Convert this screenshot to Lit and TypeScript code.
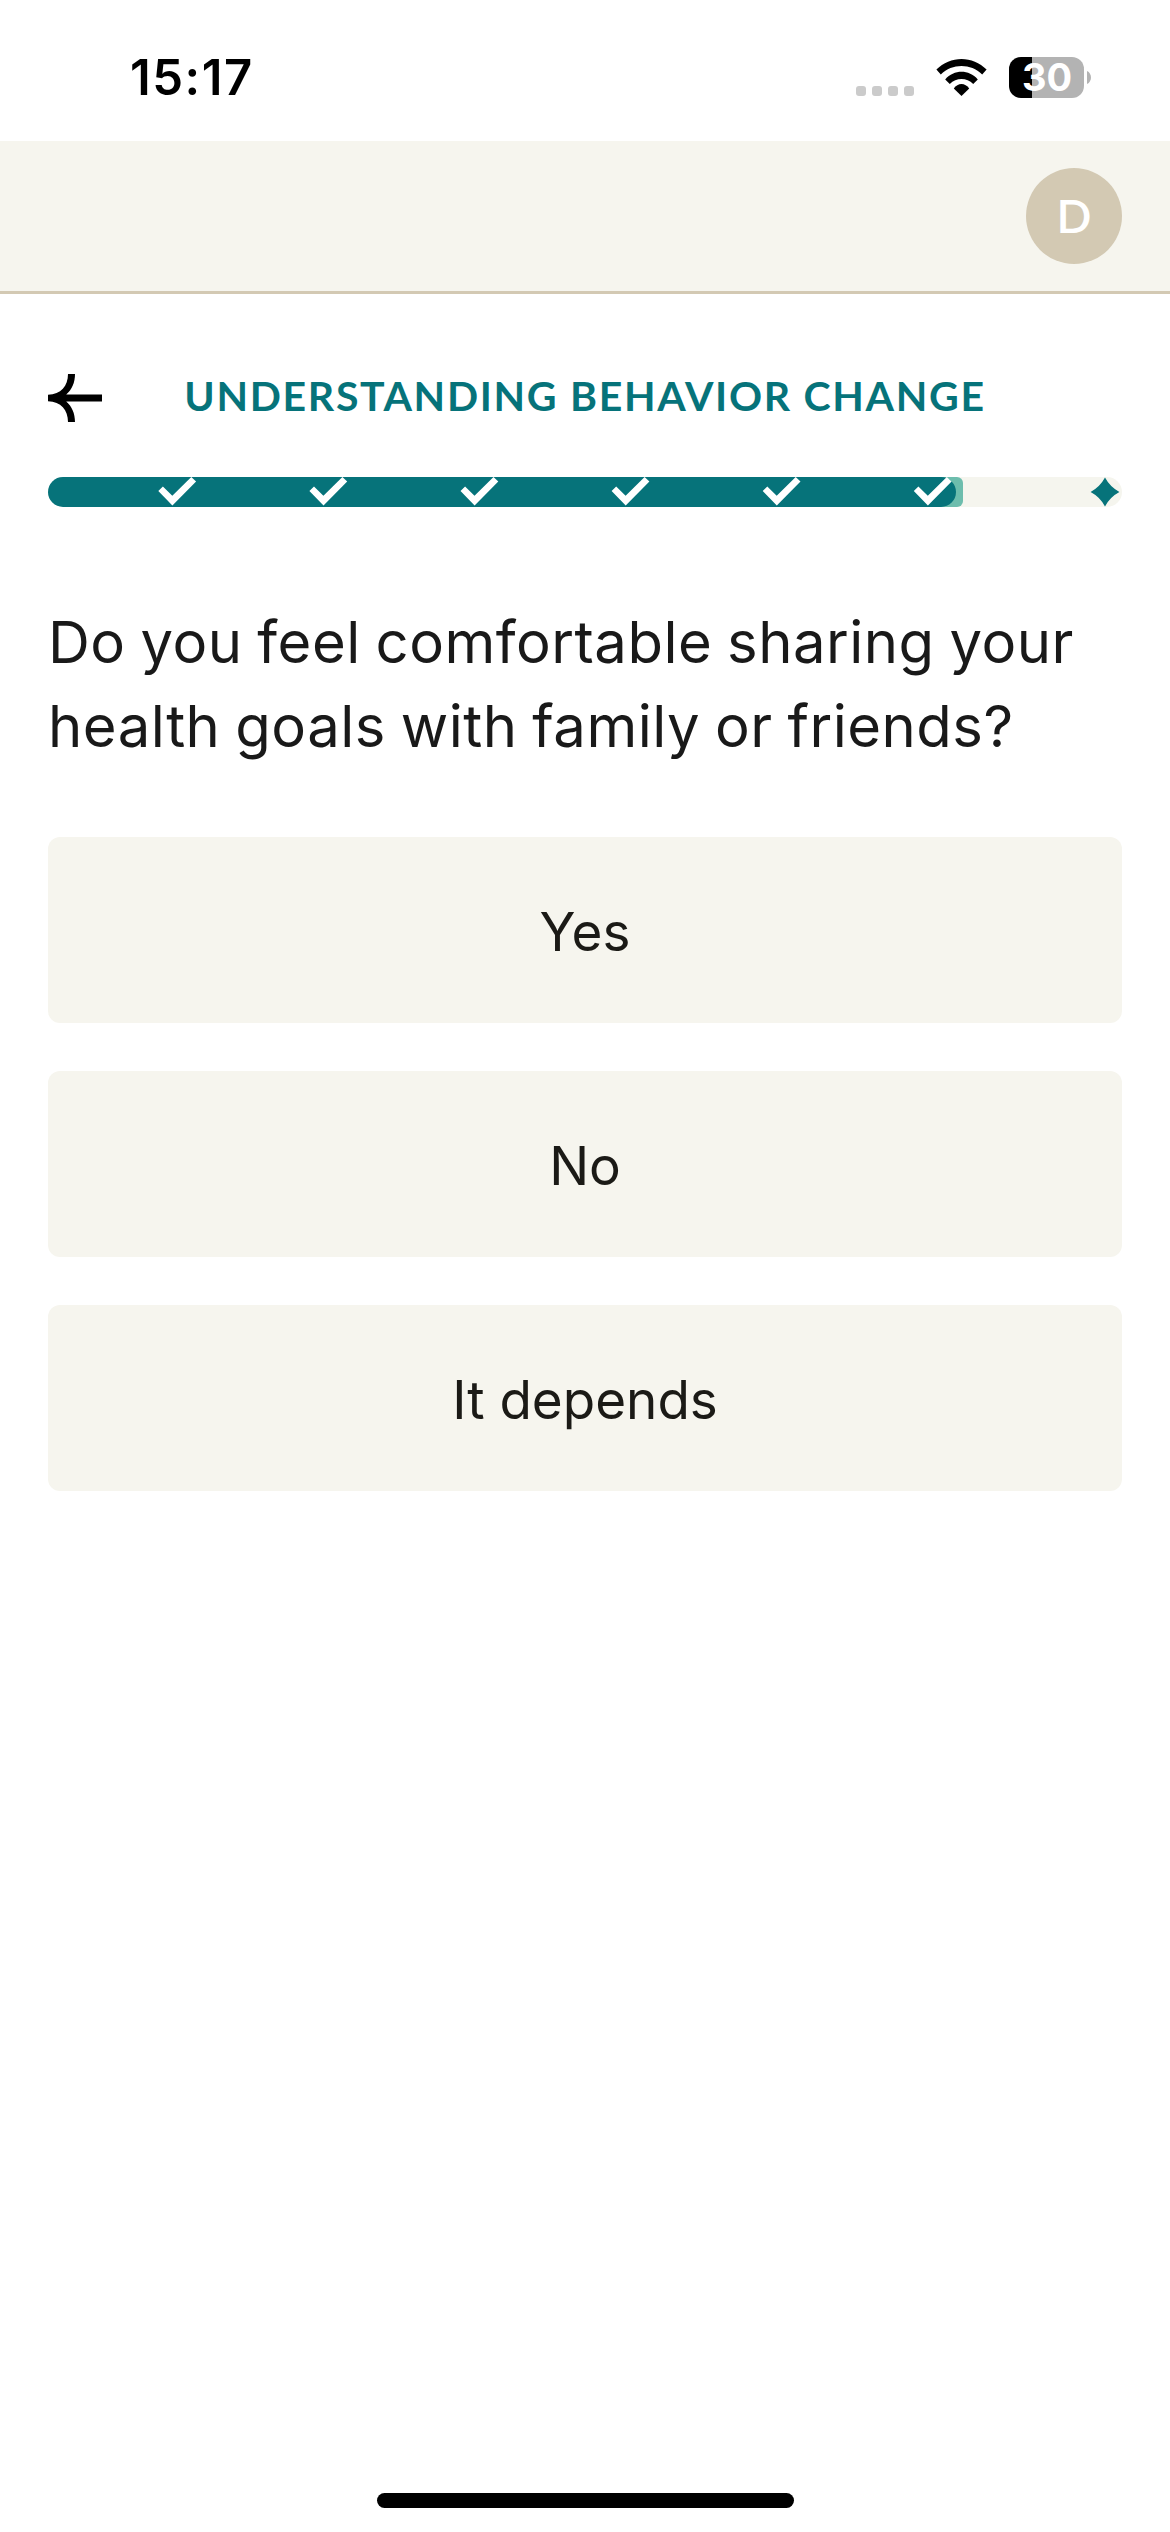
import { LitElement, html, css, svg } from "lit";
import { customElement, property } from "lit/decorators.js";

@customElement("status-bar")
class StatusBar extends LitElement {
  static styles = css`
    :host {
      display: flex;
      justify-content: space-between;
      align-items: flex-start;
      box-sizing: border-box;
      height: 141px;
      padding: 48px 79px 0 130px;
      background: #fff;
      color: #000;
      font-family: Inter, "Liberation Sans", sans-serif;
    }
    .time {
      font-size: 49px;
      font-weight: 600;
      line-height: 60px;
      letter-spacing: 1.5px;
    }
    .icons {
      display: flex;
      align-items: flex-start;
      padding-top: 9px;
    }
    .dots {
      display: flex;
      gap: 6px;
      padding-top: 29px;
      margin-right: 22px;
    }
    .dot {
      width: 10px;
      height: 10px;
      border-radius: 3px;
      background: #cbcbcb;
    }
    .wifi {
      display: block;
      width: 51px;
      height: 39px;
      margin-right: 22px;
    }
    .battery {
      width: 75px;
      height: 41px;
      border-radius: 12px;
      background: linear-gradient(90deg, #000 23px, #b3b3b3 23px);
      color: #fff;
      font-size: 38px;
      font-weight: 700;
      line-height: 41px;
      box-sizing: border-box;
      padding-left: 13px;
      white-space: nowrap;
    }
    .nub {
      display: block;
      width: 4px;
      height: 13px;
      margin: 14px 0 0 3px;
    }
  `;
  render() {
    return html`
      <div class="time">15:17</div>
      <div class="icons">
        <div class="dots">${[0, 1, 2, 3].map(() => html`<span class="dot"></span>`)}</div>
        <svg class="wifi" viewBox="0 0 51 39">
          <path d="M0.4 12.6C14.2 -1.7 36.8 -1.7 50.6 12.6L46.2 17.4C34.8 6.2 16.2 6.2 4.8 17.4Z" />
          <path d="M9.2 22.4C18.2 12.2 32.8 12.2 41.8 22.4L37.2 27C30.8 20.4 20.2 20.4 13.8 27Z" />
          <path d="M17.8 31.6C21.8 25.6 29.2 25.6 33.2 31.6L25.5 39Z" />
        </svg>
        <div class="battery">30</div>
        <svg class="nub" viewBox="0 0 4 13"><path d="M0 0C5.3 2.2 5.3 10.8 0 13Z" fill="#b3b3b3" /></svg>
      </div>
    `;
  }
}

@customElement("lesson-progress")
class LessonProgress extends LitElement {
  @property({ type: Number }) steps = 6;
  static styles = css`
    :host {
      display: block;
      height: 30px;
    }
    svg {
      display: block;
      width: 1074px;
      height: 30px;
    }
  `;
  render() {
    const ticks = Array.from({ length: this.steps }, (_, i) => 110.3 + i * 151.1);
    return html`
      <svg viewBox="0 0 1074 30">
        <rect width="1074" height="30" rx="15" fill="#f5f5ee" />
        <path d="M15 0H909a6 6 0 0 1 6 6V24a6 6 0 0 1 -6 6H15Z" fill="#6dbdad" />
        <rect width="908" height="30" rx="15" fill="#06737a" />
        ${ticks.map(
          (x) => svg`<path transform="translate(${x} 0)" fill="#fff"
            d="M0 14L4.6 9.4L14 18.8L33 0L37.8 4.6L14.1 28.4Z" />`
        )}
        <path d="M1057 0.6Q1062 10 1071.4 15Q1062 20 1057 29.4Q1052 20 1042.6 15Q1052 10 1057 0.6Z" fill="#06737a" />
      </svg>
    `;
  }
}

@customElement("app-root")
class AppRoot extends LitElement {
  static styles = css`
    :host {
      display: flex;
      flex-direction: column;
      box-sizing: border-box;
      width: 1170px;
      height: 2532px;
      background: #fff;
      font-family: Inter, "Liberation Sans", sans-serif;
    }
    .header {
      display: flex;
      justify-content: flex-end;
      align-items: flex-start;
      box-sizing: border-box;
      height: 153px;
      padding: 27px 48px 0;
      background: #f6f5ee;
      border-bottom: 3px solid #d3c9b3;
    }
    .avatar {
      width: 96px;
      height: 96px;
      border-radius: 50%;
      background: #d3c9b3;
      color: #fff;
      font-family: Lato, sans-serif;
      font-size: 46px;
      font-weight: 600;
      line-height: 96px;
      text-align: center;
    }
    main {
      display: flex;
      flex-direction: column;
      flex: 1;
      padding: 76px 48px 0;
    }
    .titlebar {
      display: grid;
      grid-template-columns: 54px 1fr 54px;
      align-items: center;
      height: 56px;
      margin-bottom: 51px;
    }
    .back {
      display: block;
      width: 54px;
      height: 48px;
    }
    h1 {
      margin: 0;
      padding-bottom: 4px;
      color: #06737a;
      font-family: Lato, sans-serif;
      font-size: 41px;
      font-weight: 700;
      line-height: 50px;
      letter-spacing: 1.68px;
      text-align: center;
      white-space: nowrap;
    }
    .question {
      margin: 93px 0 69px;
      color: #191919;
      font-size: 58px;
      line-height: 84px;
      letter-spacing: 0.5px;
      word-spacing: -2px;
      white-space: nowrap;
      font-weight: 400;
    }
    .answers {
      display: flex;
      flex-direction: column;
      gap: 48px;
    }
    .answer {
      box-sizing: border-box;
      height: 186px;
      margin: 0;
      padding: 3px 0 0;
      border: 0;
      border-radius: 12px;
      background: #f6f5ee;
      color: #1b1a16;
      font: 53px Inter, "Liberation Sans", sans-serif;
      text-align: center;
    }
    .home {
      align-self: center;
      width: 417px;
      height: 15px;
      margin-bottom: 24px;
      border-radius: 8px;
      background: #000;
    }
  `;
  render() {
    return html`
      <status-bar></status-bar>
      <div class="header"><div class="avatar">D</div></div>
      <main>
        <div class="titlebar">
          <svg class="back" viewBox="0 0 54 48">
            <path d="M20 0H27C27 8.5 24 15.5 18.2 20.5H54V27.5H18.2C24 32.5 27 39.5 27 48H20C20 36 13 27.5 0 27.3V20.7C13 20.5 20 12 20 0Z" />
          </svg>
          <h1>UNDERSTANDING BEHAVIOR CHANGE</h1>
        </div>
        <lesson-progress></lesson-progress>
        <h2 class="question">Do you feel comfortable sharing your<br />health goals with family or friends?</h2>
        <div class="answers">
          ${["Yes", "No", "It depends"].map((a) => html`<button class="answer">${a}</button>`)}
        </div>
      </main>
      <div class="home"></div>
    `;
  }
}
